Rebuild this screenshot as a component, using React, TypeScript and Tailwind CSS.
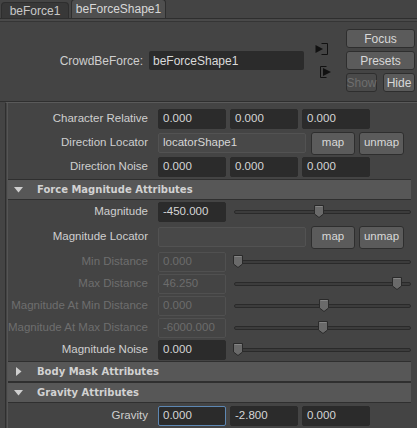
import React from "react";

const F = "font-['Liberation_Sans',Arial,sans-serif]";

function Field({
  value,
  w = "w-[68px]",
  disabled,
  focused,
}: {
  value: string;
  w?: string;
  disabled?: boolean;
  focused?: boolean;
}) {
  return (
    <div
      className={`${w} h-[20px] shrink-0 rounded-[2px] px-[4px] ${
        disabled
          ? "border border-[#505050] bg-[#444] text-[#6c6c6c]"
          : focused
            ? "border border-[#5d87b3] bg-[#2b2b2b] text-[#d6d6d6]"
            : "border border-[#2b2b2b] bg-[#2b2b2b] text-[#d6d6d6]"
      } flex items-center`}
    >
      {value}
    </div>
  );
}

function Btn({
  label,
  w,
  h = "h-[23px]",
  disabled,
}: {
  label: string;
  w: string;
  h?: string;
  disabled?: boolean;
}) {
  return (
    <div
      className={`${w} ${h} shrink-0 rounded-[3px] border border-[#2e2e2e] flex items-center justify-center ${
        disabled ? "bg-[#4a4a4a] text-[#6e6e6e]" : "bg-[#5b5b5b] text-[#d8d8d8]"
      }`}
    >
      {label}
    </div>
  );
}

function Slider({ pos }: { pos: number }) {
  // pos = thumb centre, px from the start of the track
  return (
    <div className="relative mr-[6px] ml-[4px] h-[20px] flex-1">
      <div className="absolute left-0 right-0 top-[8px] h-[4px] rounded-[2px] border border-[#2a2a2a] bg-[#3c3c3c]" />
      <svg
        className="absolute top-[2px]"
        style={{ left: pos - 6 }}
        width="12"
        height="15"
        viewBox="0 0 12 15"
      >
        <path d="M1.5 1.5 H10.5 V10 L6 13.5 L1.5 10 Z" fill="#6a6a6a" stroke="#2a2a2a" strokeWidth="1" />
        <path d="M2.5 2.5 H9.5" stroke="#858585" strokeWidth="1" />
      </svg>
    </div>
  );
}

function Row({
  label,
  disabled,
  h = "h-[22px]",
  children,
}: {
  label: string;
  disabled?: boolean;
  h?: string;
  children: React.ReactNode;
}) {
  return (
    <div className={`flex ${h} items-center`}>
      <div
        className={`w-[141px] shrink-0 pr-[1px] text-right whitespace-nowrap ${
          disabled ? "text-[#6e6e6e]" : "text-[#cfcfcf]"
        }`}
      >
        {label}
      </div>
      <div className="ml-[9px] flex flex-1 items-center gap-[4px]">{children}</div>
    </div>
  );
}

function Header({ title, open }: { title: string; open: boolean }) {
  return (
    <div className="mr-[6px] flex h-[21px] items-center border-y border-[#2f2f2f] bg-[#575757]">
      <div className="ml-[6px] flex w-[9px] justify-center">
        {open ? (
          <svg width="9" height="6" viewBox="0 0 9 6">
            <path d="M0 0 H9 L4.5 5.5 Z" fill="#cfcfcf" />
          </svg>
        ) : (
          <svg width="6" height="9" viewBox="0 0 6 9">
            <path d="M0 0 V9 L5.5 4.5 Z" fill="#cfcfcf" />
          </svg>
        )}
      </div>
      <span className="ml-[14px] font-['DejaVu_Sans',sans-serif] text-[10px] font-bold text-[#d2d2d2]">
        {title}
      </span>
    </div>
  );
}

export default function App() {
  return (
    <div className={`${F} relative h-[428px] w-[417px] overflow-hidden bg-[#444444] text-[11.5px]`}>
      {/* tabs */}
      <div className="flex h-[19px] items-end border-b border-[#2e2e2e] bg-[#444] text-[12px]">
        <div className="ml-[1px] flex h-[16px] w-[68px] items-center justify-center rounded-t-[4px] border border-b-0 border-[#2e2e2e] bg-[#383838] text-[#c8c8c8]">
          beForce1
        </div>
        <div className="ml-[2px] flex h-[19px] w-[95px] items-center justify-center rounded-t-[4px] border border-b-0 border-[#2e2e2e] bg-[#4f4f4f] text-[#d8d8d8]">
          beForceShape1
        </div>
      </div>
      <div className="h-[3px] border-b border-[#353535] bg-[#4a4a4a]" />

      {/* node header */}
      <div className="flex h-[77px] items-start text-[12px]">
        <div className="mt-[29px] flex items-center">
          <div className="w-[143px] text-right text-[#cfcfcf]">CrowdBeForce:</div>
          <div className="ml-[6px] flex h-[19px] w-[155px] items-center rounded-[2px] bg-[#2b2b2b] px-[4px] text-[#dadada]">
            beForceShape1
          </div>
        </div>
        <div className="ml-[11px] mt-[20px] flex flex-col gap-[9px]">
          <svg width="16" height="14" viewBox="0 0 16 14">
            <path d="M6.5 1.5 H12.5 V12.5 H6.5" fill="none" stroke="#111" strokeWidth="1" />
            <path d="M0.5 3 L8 7 L0.5 11 Z" fill="#111" />
          </svg>
          <svg className="ml-[4px]" width="16" height="14" viewBox="0 0 16 14">
            <path d="M1.5 1.5 H7.5 M1.5 1.5 V12.5 H7.5" fill="none" stroke="#111" strokeWidth="1" />
            <path d="M4 3 L12 7 L4 11 Z" fill="#111" />
          </svg>
        </div>
        <div className="ml-[11px] mt-[7px] flex flex-col gap-[3px]">
          <Btn label="Focus" w="w-[69px]" h="h-[19px]" />
          <Btn label="Presets" w="w-[69px]" h="h-[19px]" />
          <div className="flex gap-[6px]">
            <Btn label="Show" w="w-[31px]" h="h-[19px]" disabled />
            <Btn label="Hide" w="w-[32px]" h="h-[19px]" />
          </div>
        </div>
      </div>

      {/* scroll area */}
      <div className="mt-[2px] h-[400px] border-t border-[#2f2f2f]">
        <div className="ml-[5px] h-full border-t border-l border-[#5a5a5a] border-l-[#2f2f2f]">
          <div className="ml-[1px] h-full border-l border-[#555]">
            <div className="pt-[5px]">
              <Row label="Character Relative">
                <Field value="0.000" />
                <Field value="0.000" />
                <Field value="0.000" />
              </Row>
              <Row label="Direction Locator" h="h-[26px]">
                <div className="flex h-[20px] w-[148px] shrink-0 items-center rounded-[2px] border border-[#525252] bg-[#484848] px-[4px] text-[#d6d6d6]">
                  locatorShape1
                </div>
                <div className="ml-[1px] flex gap-[4px]">
                  <Btn label="map" w="w-[44px]" />
                  <Btn label="unmap" w="w-[45px]" />
                </div>
              </Row>
              <Row label="Direction Noise">
                <Field value="0.000" />
                <Field value="0.000" />
                <Field value="0.000" />
              </Row>
            </div>
            <div className="mt-[1px]">
              <Header title="Force Magnitude Attributes" open />
            </div>
            <div className="pt-[1px]">
              <Row label="Magnitude">
                <Field value="-450.000" />
                <Slider pos={85} />
              </Row>
              <Row label="Magnitude Locator" h="h-[28px]">
                <div className="h-[20px] w-[148px] shrink-0 rounded-[2px] border border-[#525252] bg-[#484848]" />
                <div className="ml-[1px] flex gap-[4px]">
                  <Btn label="map" w="w-[44px]" />
                  <Btn label="unmap" w="w-[45px]" />
                </div>
              </Row>
              <Row label="Min Distance" disabled>
                <Field value="0.000" disabled />
                <Slider pos={4} />
              </Row>
              <Row label="Max Distance" disabled>
                <Field value="46.250" disabled />
                <Slider pos={163} />
              </Row>
              <Row label="Magnitude At Min Distance" disabled>
                <Field value="0.000" disabled />
                <Slider pos={90} />
              </Row>
              <Row label="Magnitude At Max Distance" disabled>
                <Field value="-6000.000" disabled />
                <Slider pos={89} />
              </Row>
              <Row label="Magnitude Noise">
                <Field value="0.000" />
                <Slider pos={4} />
              </Row>
            </div>
            <Header title="Body Mask Attributes" open={false} />
            <Header title="Gravity Attributes" open />
            <div className="pt-[2px]">
              <Row label="Gravity">
                <Field value="0.000" focused />
                <Field value="-2.800" />
                <Field value="0.000" />
              </Row>
            </div>
          </div>
        </div>
      </div>
    </div>
  );
}
